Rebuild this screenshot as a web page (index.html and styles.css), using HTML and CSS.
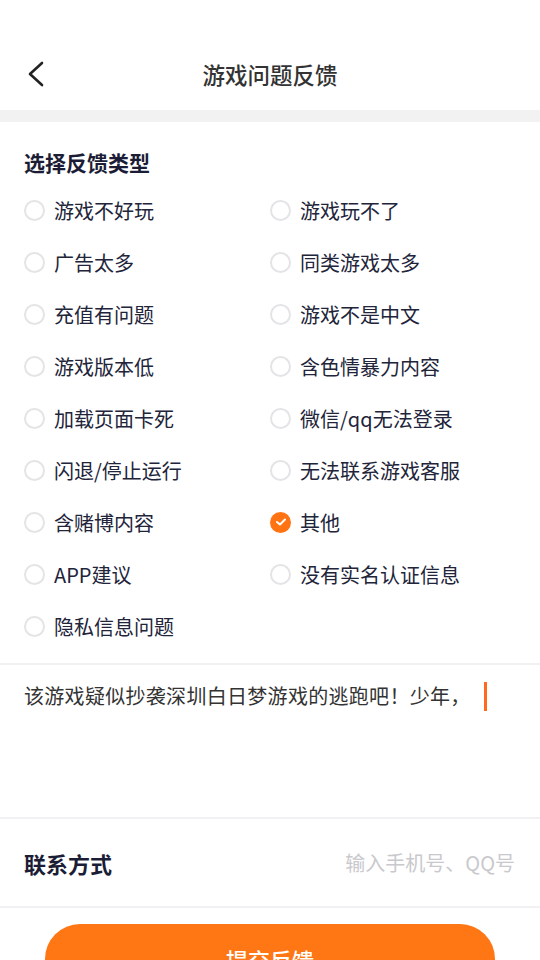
FILE: index.html
```html
<!DOCTYPE html>
<html lang="zh-CN">
<head>
<meta charset="utf-8">
<title>游戏问题反馈</title>
<link rel="stylesheet" href="styles.css">
</head>
<body>
<div class="page">
  <header class="nav">
    <span class="back">
      <svg width="24" height="30" viewBox="0 0 24 30"><path d="M17 3 L5 14 L17 25" fill="none" stroke="#222" stroke-width="2.6" stroke-linecap="round" stroke-linejoin="round"/></svg>
    </span>
    <h1 class="title">游戏问题反馈</h1>
  </header>
  <div class="gap-bar"></div>
  <section class="types">
    <h2 class="section-title">选择反馈类型</h2>
    <div class="options">
      <label class="opt"><span class="radio"></span>游戏不好玩</label>
      <label class="opt"><span class="radio"></span>游戏玩不了</label>
      <label class="opt"><span class="radio"></span>广告太多</label>
      <label class="opt"><span class="radio"></span>同类游戏太多</label>
      <label class="opt"><span class="radio"></span>充值有问题</label>
      <label class="opt"><span class="radio"></span>游戏不是中文</label>
      <label class="opt"><span class="radio"></span>游戏版本低</label>
      <label class="opt"><span class="radio"></span>含色情暴力内容</label>
      <label class="opt"><span class="radio"></span>加载页面卡死</label>
      <label class="opt"><span class="radio"></span>微信/qq无法登录</label>
      <label class="opt"><span class="radio"></span>闪退/停止运行</label>
      <label class="opt"><span class="radio"></span>无法联系游戏客服</label>
      <label class="opt"><span class="radio"></span>含赌博内容</label>
      <label class="opt"><span class="radio checked"><svg width="12" height="10" viewBox="0 0 12 10"><path d="M2 5 L5 7.5 L10 2.5" fill="none" stroke="#fff" stroke-width="2" stroke-linecap="round" stroke-linejoin="round"/></svg></span>其他</label>
      <label class="opt"><span class="radio"></span>APP建议</label>
      <label class="opt"><span class="radio"></span>没有实名认证信息</label>
      <label class="opt"><span class="radio"></span>隐私信息问题</label>
    </div>
  </section>
  <div class="desc"><span class="desc-text">该游戏疑似抄袭深圳白日梦游戏的逃跑吧！少年，</span><span class="cursor"></span></div>
  <div class="contact">
    <span class="contact-label">联系方式</span>
    <span class="contact-input">输入手机号、QQ号</span>
  </div>
  <div class="submit-wrap">
    <button class="submit">提交反馈</button>
  </div>
</div>
</body>
</html>
```
FILE: styles.css
```css
* { box-sizing: border-box; }
html, body { margin: 0; padding: 0; background: #fff; }
body {
  font-family: "Noto Sans CJK SC", "Noto Sans", sans-serif;
  color: #2a2c3f;
  width: 540px;
  height: 960px;
  overflow: hidden;
}
.nav {
  height: 110px;
  padding-top: 38px;
  display: flex;
  align-items: center;
  justify-content: center;
  position: relative;
}
.back {
  position: absolute;
  left: 25px;
  top: 60px;
  width: 24px;
  height: 30px;
  display: flex;
}
.title {
  margin: 0;
  font-size: 22.5px;
  font-weight: 500;
  color: #333;
  line-height: 30px;
}
.gap-bar { height: 12px; background: #f2f2f2; }
.types { padding: 25px 0 11px 24px; }
.section-title {
  margin: 0;
  font-size: 21px;
  font-weight: 700;
  line-height: 30px;
  color: #1b1d36;
}
.options {
  margin-top: 7px;
  display: grid;
  grid-template-columns: 246px 1fr;
  grid-auto-rows: 52px;
}
.opt {
  display: flex;
  align-items: center;
  font-size: 20px;
  color: #22243a;
}
.radio {
  width: 21px;
  height: 21px;
  border-radius: 50%;
  border: 2px solid #e4e4e7;
  margin-right: 9px;
  display: flex;
  align-items: center;
  justify-content: center;
  flex: none;
}
.radio.checked { background: #ff7313; border-color: #ff7313; }
.desc {
  border-top: 2px solid #f1f1f3;
  height: 154px;
  padding: 17px 24px 0;
  display: flex;
  align-items: flex-start;
  font-size: 20px;
  line-height: 28px;
  color: #333;
  letter-spacing: 0.3px;
}
.cursor {
  width: 3px;
  height: 29px;
  background: #ff6a1e;
  margin-left: 13px;
}
.contact {
  border-top: 2px solid #f1f1f3;
  border-bottom: 2px solid #f1f1f3;
  height: 91px;
  padding: 0 25px 0 24px;
  display: flex;
  align-items: center;
  justify-content: space-between;
}
.contact-label { font-size: 22px; font-weight: 700; color: #1b1d36; }
.contact-input { font-size: 20px; color: #c9c9cd; }
.submit-wrap { padding: 16px 45px 0; }
.submit {
  width: 100%;
  height: 70px;
  border: none;
  border-radius: 35px;
  background: #ff7614;
  color: #fff;
  font-family: inherit;
  font-size: 22px;
  font-weight: 500;
}
```
